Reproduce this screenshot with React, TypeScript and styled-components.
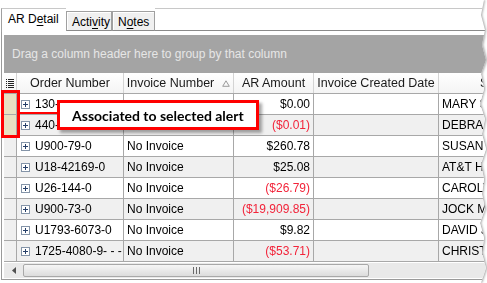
import styled, { createGlobalStyle } from 'styled-components'

const GlobalStyle = createGlobalStyle`
  html, body {
    margin: 0;
    padding: 0;
    background: #fff;
  }
  body {
    font-family: "Liberation Sans", Arial, sans-serif;
    font-size: 12px;
    color: #000;
  }
`

// jagged right edge of the cut-out screenshot
const tornPoints = (() => {
  const xs = [484, 481, 485, 482, 486, 481, 484, 480, 485, 482, 486, 481, 484, 482, 485, 480, 484, 482, 486, 481]
  const pts: string[] = ['0 0']
  const step = 283 / (xs.length - 1)
  xs.forEach((x, i) => pts.push(`${x}px ${Math.round(i * step)}px`))
  pts.push('0 283px')
  return pts.join(', ')
})()

const Shadow = styled.div`
  width: 487px;
  height: 283px;
  filter: drop-shadow(1px 0 1px rgba(0, 0, 0, 0.35));
`

const Frame = styled.div`
  position: relative;
  width: 487px;
  height: 283px;
  overflow: hidden;
  background: #fff;
  clip-path: polygon(${tornPoints});
  display: flex;
  flex-direction: column;
  padding-left: 1px;
  box-sizing: border-box;
`

const TabBar = styled.div`
  display: flex;
  align-items: flex-end;
  height: 32px;
  flex-shrink: 0;
`

const Tab = styled.div<{ $active?: boolean; $width: number }>`
  box-sizing: border-box;
  height: ${p => (p.$active ? 24 : 20)}px;
  padding: ${p => (p.$active ? '3px 0 0 6px' : '3px 0 0 5px')};
  width: ${p => p.$width}px;
  background: ${p => (p.$active ? '#fff' : '#f0f0f0')};
  border: 1px solid ${p => (p.$active ? '#c8c8c8' : '#a0a0a0')};
  border-left-color: #a0a0a0;
  border-bottom: ${p => (p.$active ? 'none' : '1px solid #8a8a8a')};
  border-right: ${p => (p.$active ? 'none' : '1px solid #a0a0a0')};
  box-shadow: ${p => (p.$active ? 'none' : 'inset 1px 1px 0 #fff')};
  font-size: 12px;
  line-height: 14px;
  color: #000;
  white-space: nowrap;
  margin-bottom: ${p => (p.$active ? 0 : 1)}px;

  u {
    text-decoration-thickness: 1px;
    text-underline-offset: 2px;
  }
`

const TabFiller = styled.div`
  flex: 1;
  height: 23px;
  box-sizing: border-box;
  margin-bottom: 1px;
  border-top: 1px solid #c8c8c8;
  border-bottom: 1px solid #8a8a8a;
`

const Panel = styled.div`
  display: flex;
  flex-direction: column;
  border-left: 1px solid #9a9a9a;
  border-bottom: 1px solid #9a9a9a;
  padding: 3px 0 1px 2px;
  height: 248px;
  box-sizing: border-box;
  width: 600px;
`

const GroupPanel = styled.div`
  height: 38px;
  flex-shrink: 0;
  background: #a4a4a4;
  color: #e6e6e6;
  display: flex;
  align-items: center;
  padding-left: 8px;
  font-size: 12px;
`

const cols = '13px 107px 110px 80px 125px 150px'

const HeaderRow = styled.div`
  display: grid;
  grid-template-columns: ${cols};
  height: 21px;
  box-sizing: border-box;
  background: linear-gradient(#ffffff, #f4f4f4);
  border-bottom: 1px solid #a8a8a8;
  flex-shrink: 0;
`

const HeaderCell = styled.div<{ $start?: boolean }>`
  box-sizing: border-box;
  border-right: 1px solid #d4d4d4;
  display: flex;
  align-items: center;
  justify-content: ${p => (p.$start ? 'flex-start' : 'center')};
  padding-left: ${p => (p.$start ? 41 : 0)}px;
  gap: 8px;
  font-size: 12.5px;
  color: #1a1a1a;
  white-space: nowrap;
  overflow: hidden;
`

const Row = styled.div<{ $alt: boolean }>`
  display: grid;
  grid-template-columns: ${cols};
  height: 21px;
  box-sizing: border-box;
  background: ${p => (p.$alt ? '#f0f0f0' : '#fff')};
  border-bottom: 1px solid #a8a8a8;
  flex-shrink: 0;
`

const Cell = styled.div<{ $align?: 'left' | 'right'; $red?: boolean }>`
  box-sizing: border-box;
  border-right: 1px solid #a8a8a8;
  display: flex;
  align-items: center;
  justify-content: ${p => (p.$align === 'right' ? 'flex-end' : 'flex-start')};
  padding: 0 ${p => (p.$align === 'right' ? 3 : 0)}px 0 3px;
  color: ${p => (p.$red ? '#f2243a' : '#000')};
  white-space: nowrap;
  overflow: hidden;
  font-size: 12px;
`

const Indicator = styled.div<{ $flag: boolean }>`
  box-sizing: border-box;
  border-right: 1px solid #a8a8a8;
  background: ${p => (p.$flag ? '#e8e1c2' : '#f0f0f0')};
`

const OrderCell = styled(Cell)`
  gap: 5px;
  padding-left: 4px;
`

const Scrollbar = styled.div`
  display: flex;
  align-items: center;
  height: 15px;
  flex-shrink: 0;
  margin-top: 1px;
  background: #e9e9e9;
`

const ArrowButton = styled.div`
  width: 19px;
  height: 15px;
  display: flex;
  align-items: center;
  justify-content: center;
  color: #505050;
`

const Thumb = styled.div`
  width: 346px;
  height: 13px;
  box-sizing: border-box;
  border: 1px solid #a8a8a8;
  border-radius: 2px;
  background: linear-gradient(#f6f6f6, #dcdcdc);
  display: flex;
  align-items: center;
  justify-content: center;
`

const RedFrame = styled.div`
  position: absolute;
  left: 1px;
  top: 90px;
  width: 19px;
  height: 48px;
  box-sizing: border-box;
  border: 3px solid #ff0000;
`

const Connector = styled.div`
  position: absolute;
  left: 20px;
  top: 112px;
  width: 38px;
  height: 2px;
  background: #ff0000;
`

const Callout = styled.div`
  position: absolute;
  left: 57px;
  top: 100px;
  width: 202px;
  height: 30px;
  box-sizing: border-box;
  border: 3px solid #ff0000;
  background: #fff;
  box-shadow: 3px 3px 3px rgba(0, 0, 0, 0.35);
  display: flex;
  align-items: center;
  padding-left: 12px;
  font-family: Lato, "Liberation Sans", sans-serif;
  font-weight: 700;
  font-size: 14px;
  color: #000;
  white-space: nowrap;
`

const ExpandBox = () => (
  <svg width="9" height="9" viewBox="0 0 9 9">
    <rect x="0.5" y="0.5" width="8" height="8" fill="#fff" stroke="#8494a8" />
    <path d="M2 4.5h5M4.5 2v5" stroke="#27406a" strokeWidth="1" />
  </svg>
)

const ColumnsIcon = () => (
  <svg width="8" height="9" viewBox="0 0 8 9">
    {[0, 2, 4, 6, 8].map(y => (
      <g key={y}>
        <rect x="0" y={y} width="1" height="1" fill="#222" />
        <rect x="2" y={y} width="6" height="1" fill="#222" />
      </g>
    ))}
  </svg>
)

const SortIcon = () => (
  <svg width="8" height="7" viewBox="0 0 8 7">
    <path d="M4 0.8 L7.3 6.3 H0.7 Z" fill="none" stroke="#9a9a9a" strokeWidth="1" />
  </svg>
)

const Grip = () => (
  <svg width="7" height="7" viewBox="0 0 7 7">
    <path d="M0.5 0v7M3.5 0v7M6.5 0v7" stroke="#6a6a6a" strokeWidth="1" />
  </svg>
)

interface Line {
  order: string
  invoice: string
  amount: string
  name: string
  flag?: boolean
}

const rows: Line[] = [
  { order: '130-', invoice: '', amount: '$0.00', name: 'MARY SMITH', flag: true },
  { order: '440-', invoice: '', amount: '($0.01)', name: 'DEBRA LEE', flag: true },
  { order: 'U900-79-0', invoice: 'No Invoice', amount: '$260.78', name: 'SUSAN TAYLOR' },
  { order: 'U18-42169-0', invoice: 'No Invoice', amount: '$25.08', name: 'AT&T HARRIS' },
  { order: 'U26-144-0', invoice: 'No Invoice', amount: '($26.79)', name: 'CAROLYN WEST' },
  { order: 'U900-73-0', invoice: 'No Invoice', amount: '($19,909.85)', name: 'JOCK MILLER' },
  { order: 'U1793-6073-0', invoice: 'No Invoice', amount: '$9.82', name: 'DAVID JONES' },
  { order: '1725-4080-9- - -', invoice: 'No Invoice', amount: '($53.71)', name: 'CHRISTINE' },
]

const App = () => {
  return (
    <>
      <GlobalStyle />
      <Shadow>
        <Frame>
          <TabBar>
            <Tab $active $width={65}>AR D<u>e</u>tail</Tab>
            <Tab $width={46}>Acti<u>v</u>ity</Tab>
            <Tab $width={43}>N<u>o</u>tes</Tab>
            <TabFiller />
          </TabBar>
          <Panel>
            <GroupPanel>Drag a column header here to group by that column</GroupPanel>
            <HeaderRow>
              <HeaderCell><ColumnsIcon /></HeaderCell>
              <HeaderCell>Order Number</HeaderCell>
              <HeaderCell>Invoice Number <SortIcon /></HeaderCell>
              <HeaderCell>AR Amount</HeaderCell>
              <HeaderCell>Invoice Created Date</HeaderCell>
              <HeaderCell $start>Sales Rep</HeaderCell>
            </HeaderRow>
            {rows.map((r, i) => (
              <Row key={r.order} $alt={i % 2 === 1}>
                <Indicator $flag={!!r.flag} />
                <OrderCell><ExpandBox />{r.order}</OrderCell>
                <Cell>{r.invoice}</Cell>
                <Cell $align="right" $red={r.amount.startsWith('(')}>{r.amount}</Cell>
                <Cell />
                <Cell>{r.name}</Cell>
              </Row>
            ))}
            <Scrollbar>
              <ArrowButton>
                <svg width="4" height="7" viewBox="0 0 4 7">
                  <path d="M4 0 L0 3.5 L4 7 Z" fill="#505050" />
                </svg>
              </ArrowButton>
              <Thumb><Grip /></Thumb>
            </Scrollbar>
          </Panel>
          <RedFrame />
          <Connector />
          <Callout>Associated to selected alert</Callout>
        </Frame>
      </Shadow>
    </>
  )
}

export default App
